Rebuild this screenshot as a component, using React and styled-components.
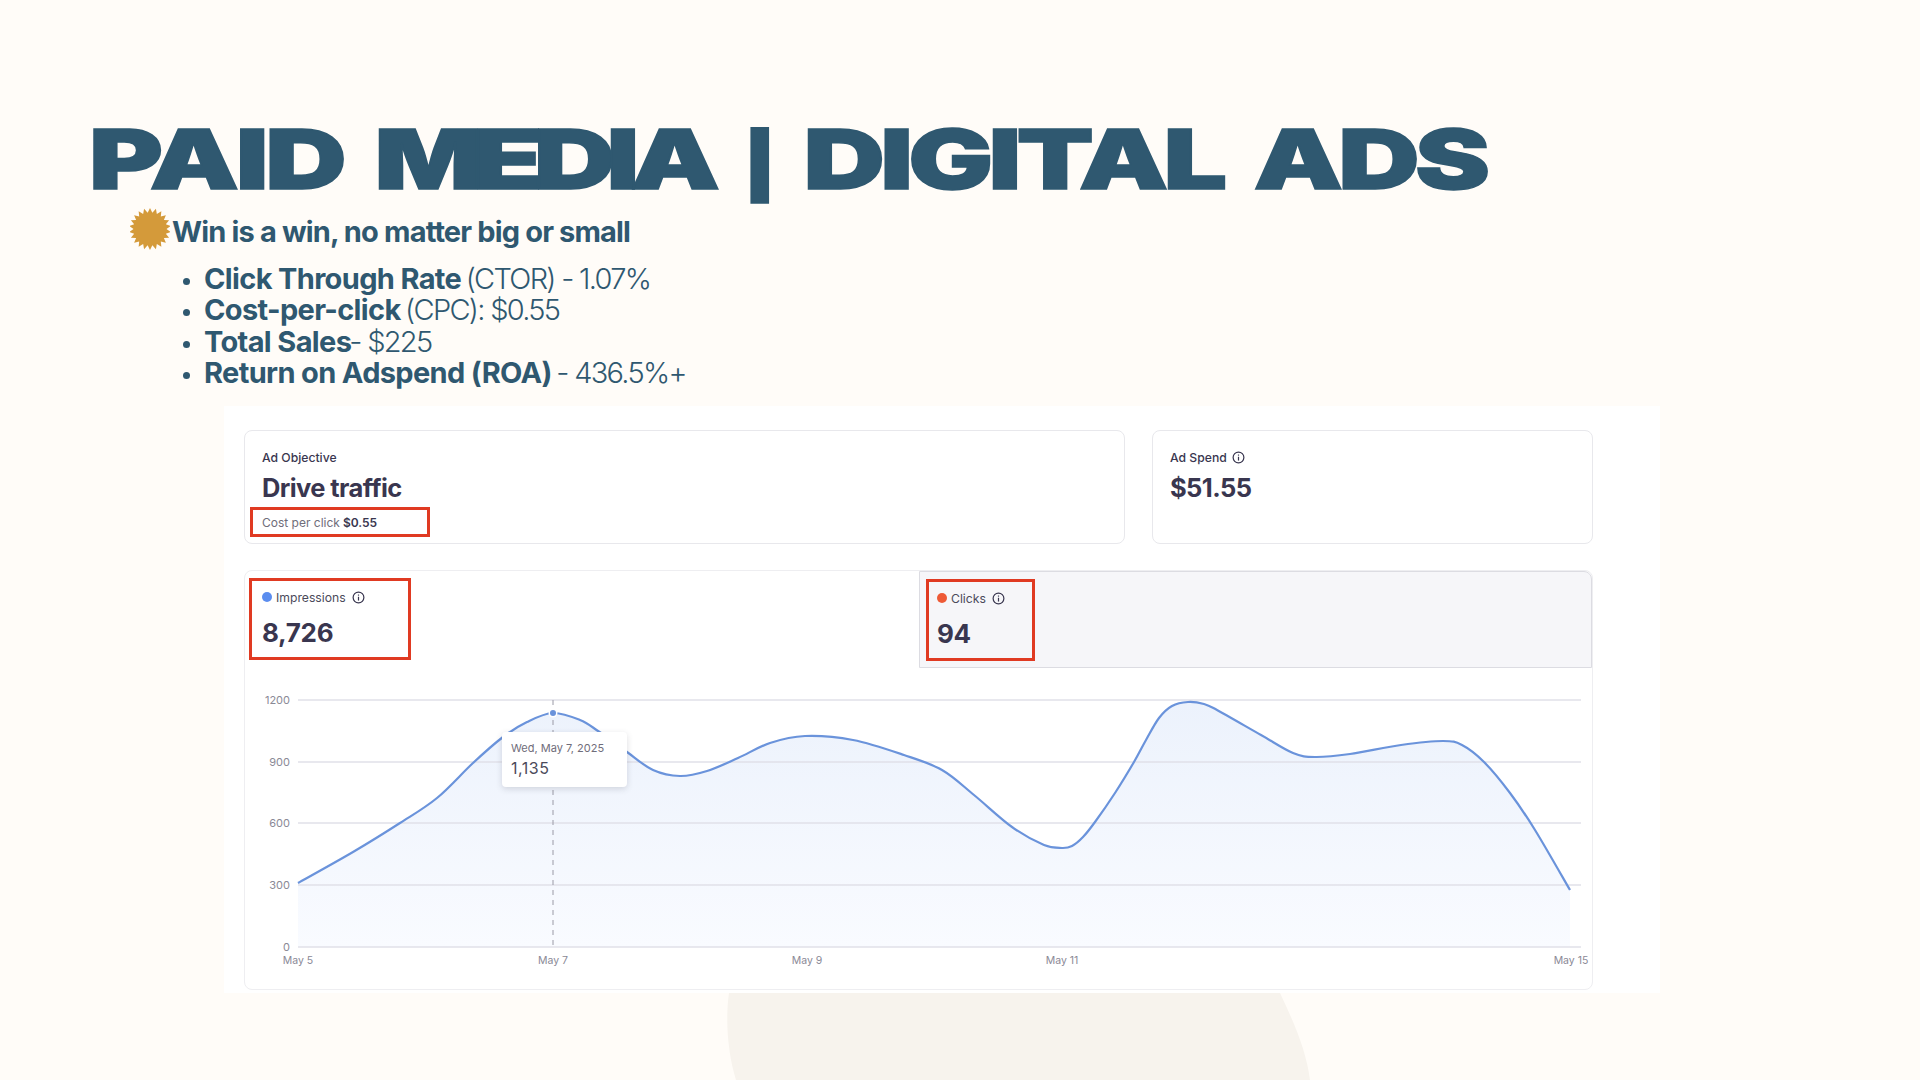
import React from 'react'
import styled, { createGlobalStyle } from 'styled-components'

const GlobalStyle = createGlobalStyle`
  html, body { margin: 0; padding: 0; background: #fffcf8; }
  * { box-sizing: border-box; }
`

// chart points, in page pixels
const curve = [
  [298, 883], [353, 852], [400, 823], [437, 798], [473, 763], [503, 737], [527, 722], [553, 713],
  [580, 720], [598, 731], [627, 752], [653, 770], [680, 776], [707, 771], [738, 758], [770, 743],
  [805, 736], [853, 740], [904, 755], [942, 770], [974, 795], [1012, 827], [1044, 845], [1062, 848],
  [1072, 846], [1083, 837], [1095, 822], [1115, 793], [1134, 762], [1146, 740], [1159, 718], [1172, 706],
  [1188, 702], [1204, 704], [1217, 710], [1261, 735], [1293, 753],
  [1315, 757], [1350, 754], [1401, 745], [1443, 741], [1462, 745], [1484, 762], [1510, 793], [1535, 830], [1570, 890],
]

const smoothPath = (pts) => {
  let d = `M${pts[0][0]} ${pts[0][1]}`
  for (let i = 0; i < pts.length - 1; i++) {
    const p0 = pts[i - 1] || pts[i]
    const p1 = pts[i]
    const p2 = pts[i + 1]
    const p3 = pts[i + 2] || p2
    const c1x = p1[0] + (p2[0] - p0[0]) / 6
    const c1y = p1[1] + (p2[1] - p0[1]) / 6
    const c2x = p2[0] - (p3[0] - p1[0]) / 6
    const c2y = p2[1] - (p3[1] - p1[1]) / 6
    d += ` C${c1x} ${c1y} ${c2x} ${c2y} ${p2[0]} ${p2[1]}`
  }
  return d
}

const burst = (cx, cy, outer, inner, n) => {
  const out = []
  for (let i = 0; i < n * 2; i++) {
    const r = i % 2 === 0 ? outer : inner
    const a = (Math.PI * i) / n - Math.PI / 2
    out.push(`${(cx + r * Math.cos(a)).toFixed(2)},${(cy + r * Math.sin(a)).toFixed(2)}`)
  }
  return out.join(' ')
}

const Page = styled.div`
  position: relative;
  width: 1920px;
  height: 1080px;
  overflow: hidden;
  background: #fffcf8;
  color: #2f5870;
  font-family: Inter, "Liberation Sans", sans-serif;
  padding-top: 120px;
`

const Blob = styled.svg`
  position: absolute;
  left: 0;
  top: 0;
`

const Title = styled.h1`
  margin: 0 0 0 89px;
  height: 80px;
  line-height: 80px;
  font-size: 82px;
  font-weight: 900;
  white-space: nowrap;
  letter-spacing: -3.5px;
  word-spacing: 9.7px;
  color: #2f5870;
  -webkit-text-stroke: 1.5px #2f5870;
  transform: scaleX(1.375);
  transform-origin: left center;
`

const TitleWord = styled.span`
  letter-spacing: ${(p) => p.$track}px;
`

const TitleBar = styled.span`
  font-size: 63px;
  vertical-align: 1px;
`

const WinRow = styled.div`
  display: flex;
  align-items: center;
  gap: 2px;
  margin: 10px 0 0 130px;
  height: 42px;
`

const BadgeIcon = styled.svg`
  margin-top: -5px;
`

const WinText = styled.div`
  font-size: 29px;
  font-weight: 700;
  letter-spacing: -0.85px;
  color: #2f5870;
`

const Results = styled.ul`
  margin: 11px 0 0;
  padding: 0 0 0 204px;
  list-style: disc;
  font-size: 29px;
  line-height: 31.3px;
  height: 126px;
`

const Result = styled.li`
  font-weight: 300;
  letter-spacing: -1.7px;
  white-space: nowrap;
  strong { font-weight: 700; letter-spacing: -0.65px; margin-right: -2px; }
  &::marker { font-size: 22px; }
`

const Panel = styled.section`
  position: relative;
  width: 1436px;
  height: 587px;
  margin: 17px 0 0 224px;
  padding: 24px 67px 0 20px;
  background: #fff;
  color: #39364f;
`

const TopRow = styled.div`
  display: grid;
  grid-template-columns: 881px 441px;
  gap: 27px;
`

const Card = styled.div`
  height: 114px;
  border: 1.5px solid #e8e8ec;
  border-radius: 8px;
  padding: 18px 6px 0 17px;
`

const Label = styled.div`
  display: flex;
  align-items: center;
  gap: 5px;
  height: 16px;
  font-size: 12.2px;
  font-weight: 500;
  color: #39364f;
`

const BigText = styled.div`
  font-size: 25.5px;
  font-weight: 700;
  letter-spacing: -0.6px;
  line-height: 32px;
  margin-top: 7px;
  color: #39364f;
`

const CostBox = styled.div`
  display: flex;
  align-items: center;
  width: 180px;
  height: 30px;
  margin: 3px 0 0 -12px;
  padding-left: 9px;
  border: 3px solid #e03a22;
  font-size: 12px;
  color: #6f6d7a;
  strong { color: #39364f; font-weight: 600; margin-left: 3px; }
`

const ChartCard = styled.div`
  position: relative;
  margin-top: 26px;
  height: 420px;
  border: 1.5px solid #eeeef1;
  border-radius: 8px;
`

const Tabs = styled.div`
  display: grid;
  grid-template-columns: 674px 1fr;
  height: 97px;
`

const Tab = styled.div`
  padding: 7px 0 0 ${(p) => p.$inset}px;
  background: ${(p) => (p.$active ? '#f6f6f9' : 'transparent')};
  border: ${(p) => (p.$active ? '1.5px solid #dcdce2' : 'none')};
  border-radius: ${(p) => (p.$active ? '0 8px 0 0' : '0')};
`

const MetricBox = styled.div`
  width: ${(p) => p.$width}px;
  height: 82px;
  border: 3px solid #e03a22;
  padding: 8px 0 0 ${(p) => p.$pad}px;
`

const MetricLabel = styled.div`
  display: flex;
  align-items: center;
  gap: ${(p) => p.$gap}px;
  height: 16px;
  font-size: 12.2px;
  color: #4b4a5a;
`

const Dot = styled.span`
  width: 10px;
  height: 10px;
  border-radius: 50%;
  background: ${(p) => p.$color};
`

const HelpIcon = styled.span`
  display: flex;
  margin-left: 2px;
`

const MetricValue = styled.div`
  font-size: 26px;
  font-weight: 700;
  letter-spacing: -0.3px;
  line-height: 34px;
  margin-top: 11px;
  color: #39364f;
`

const Chart = styled.svg`
  display: block;
`

const AxisText = styled.text`
  font-family: Inter, "Liberation Sans", sans-serif;
  font-size: ${(p) => p.$size}px;
  fill: #8a8996;
`

const Tooltip = styled.div`
  position: absolute;
  left: 257px;
  top: 161px;
  width: 125px;
  height: 55px;
  padding: 9px 0 0 9px;
  background: #fff;
  border-radius: 4px;
  box-shadow: 0 2px 6px rgba(60, 60, 80, 0.18);
`

const TipDate = styled.div`
  font-size: 11px;
  line-height: 14px;
  color: #6f6d7a;
`

const TipValue = styled.div`
  font-size: 16px;
  line-height: 20px;
  margin-top: 3px;
  letter-spacing: 0.5px;
  color: #4b4a5a;
`

const Info = ({ size = 13 }) => (
  <svg width={size} height={size} viewBox="0 0 14 14" fill="none" stroke="#39364f" strokeWidth="1.3">
    <circle cx="7" cy="7" r="5.8" />
    <path d="M7 6.2V10.3" />
    <path d="M7 3.8V5" />
  </svg>
)

const Badge = () => (
  <BadgeIcon width="40" height="42" viewBox="0 0 40 42">
    <polygon points={burst(20, 21, 21, 16.5, 22)} fill="#d49a3a" />
  </BadgeIcon>
)

const ticksY = [[700, '1200'], [762, '900'], [823, '600'], [885, '300'], [947, '0']]
const ticksX = [[298, 'May 5'], [553, 'May 7'], [807, 'May 9'], [1062, 'May 11'], [1571, 'May 15']]

const App = () => {
  const line = smoothPath(curve)
  const area = `${line} L1570 947 L298 947 Z`
  return (
    <Page>
      <GlobalStyle />
      <Blob width="1920" height="1080" viewBox="0 0 1920 1080">
        <path d="M729 993C725 1020 728 1055 736 1080L1310 1080C1306 1050 1295 1025 1280 993Z" fill="#f7f3ed" />
      </Blob>
      <Title>
        <TitleWord $track={-2.4}>PAID</TitleWord> <TitleWord $track={-6.4}>MEDIA</TitleWord> <TitleBar>|</TitleBar> DIGITAL ADS
      </Title>
      <WinRow>
        <Badge />
        <WinText>Win is a win, no matter big or small</WinText>
      </WinRow>
      <Results>
        <Result><strong>Click Through Rate</strong> (CTOR) - 1.07%</Result>
        <Result><strong>Cost-per-click</strong> (CPC): $0.55</Result>
        <Result><strong>Total Sales</strong>- $225</Result>
        <Result><strong>Return on Adspend (ROA)</strong> - 436.5%+</Result>
      </Results>
      <Panel>
        <TopRow>
          <Card>
            <Label>Ad Objective</Label>
            <BigText>Drive traffic</BigText>
            <CostBox>Cost per click <strong>$0.55</strong></CostBox>
          </Card>
          <Card>
            <Label>Ad Spend <Info /></Label>
            <BigText>$51.55</BigText>
          </Card>
        </TopRow>
        <ChartCard>
          <Tabs>
            <Tab $inset={4}>
              <MetricBox $width={162} $pad={10}>
                <MetricLabel $gap={4}><Dot $color="#5b8def" />Impressions<HelpIcon><Info /></HelpIcon></MetricLabel>
                <MetricValue>8,726</MetricValue>
              </MetricBox>
            </Tab>
            <Tab $active $inset={6}>
              <MetricBox $width={109} $pad={8}>
                <MetricLabel $gap={4}><Dot $color="#ee5a36" />Clicks<HelpIcon><Info /></HelpIcon></MetricLabel>
                <MetricValue>94</MetricValue>
              </MetricBox>
            </Tab>
          </Tabs>
          <Chart width="1346" height="320" viewBox="245 668 1346 320">
            <defs>
              <linearGradient id="areaFill" x1="0" y1="0" x2="0" y2="1">
                <stop offset="0" stopColor="#ecf2fc" />
                <stop offset="1" stopColor="#f9fbff" />
              </linearGradient>
            </defs>
            <path d={area} fill="url(#areaFill)" />
            {ticksY.map(([y, t]) => (
              <g key={t}>
                <line x1="298" x2="1581" y1={y} y2={y} stroke="#e1e1e8" strokeWidth="1.3" />
                <AxisText $size={11} x="290" y={y + 4} textAnchor="end">{t}</AxisText>
              </g>
            ))}
            <line x1="553" x2="553" y1="700" y2="945" stroke="#9a9aa6" strokeWidth="1" strokeDasharray="5 5" />
            <path d={line} fill="none" stroke="#6a93db" strokeWidth="2.2" />
            <circle cx="553" cy="713" r="4.5" fill="#fff" />
            <circle cx="553" cy="713" r="3" fill="#6a93db" />
            {ticksX.map(([x, t]) => (
              <AxisText $size={10.5} key={t} x={x} y="964" textAnchor="middle">{t}</AxisText>
            ))}
          </Chart>
          <Tooltip>
            <TipDate>Wed, May 7, 2025</TipDate>
            <TipValue>1,135</TipValue>
          </Tooltip>
        </ChartCard>
      </Panel>
    </Page>
  )
}

export default App
